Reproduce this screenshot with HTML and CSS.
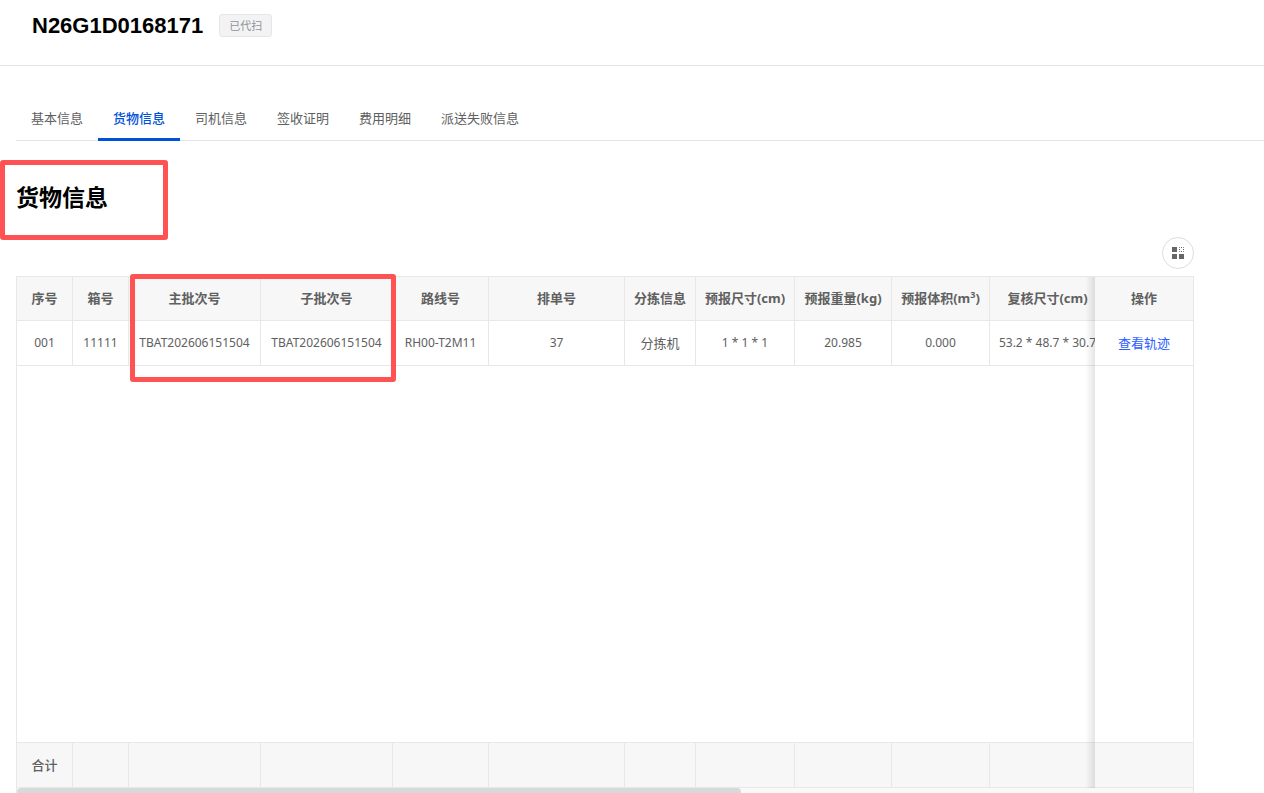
FILE: index.html
```
<!DOCTYPE html>
<html lang="zh-CN">
  <head>
    <meta charset="UTF-8" />
    <meta name="viewport" content="width=device-width, initial-scale=1.0" />
    <title>货物信息</title>
    <link rel="stylesheet" href="styles.css">
  </head>

  <body>
    <header class="page-header">
      <h1>N26G1D0168171</h1>
      <span class="tag">已代扫</span>
    </header>

    <main class="content">
      <nav class="tabs">
        <a href="#basic">基本信息</a>
        <a href="#cargo" class="active">货物信息</a>
        <a href="#driver">司机信息</a>
        <a href="#sign">签收证明</a>
        <a href="#cost">费用明细</a>
        <a href="#failed">派送失败信息</a>
      </nav>

      <section class="cargo" id="cargo">
        <div class="cargo-title">
          <h2>货物信息</h2>
          <div class="mark mark-title"></div>
        </div>

        <div class="toolbar">
          <button type="button" class="round-btn" aria-label="列设置">
            <svg width="14" height="14" viewBox="0 0 14 14">
              <path d="M1 1h5v5H1zM1 8h5v5H1zM8 8h5v5H8z" fill="#666" />
              <path d="M8.5 1.5h4v4h-4z" fill="none" stroke="#666" stroke-dasharray="1 1" stroke-dashoffset="0.5" />
            </svg>
          </button>
        </div>

        <div class="table-box">
          <div class="table-scroll">
            <table>
              <colgroup>
                <col class="w-56"><col class="w-56"><col class="w-132"><col class="w-132">
                <col class="w-96"><col class="w-136"><col class="w-71"><col class="w-99">
                <col class="w-97"><col class="w-98"><col class="w-116"><col>
                <col class="w-98">
              </colgroup>
              <thead>
                <tr>
                  <th>序号</th>
                  <th>箱号</th>
                  <th>主批次号</th>
                  <th>子批次号</th>
                  <th>路线号</th>
                  <th>排单号</th>
                  <th>分拣信息</th>
                  <th>预报尺寸(cm)</th>
                  <th>预报重量(kg)</th>
                  <th>预报体积(m<sup>3</sup>)</th>
                  <th>复核尺寸(cm)</th>
                  <th></th>
                  <th class="fixed">操作</th>
                </tr>
              </thead>
              <tbody>
                <tr>
                  <td class="num">001</td>
                  <td class="num">11111</td>
                  <td class="num">TBAT202606151504</td>
                  <td class="num">TBAT202606151504</td>
                  <td class="num">RH00-T2M11</td>
                  <td class="num">37</td>
                  <td>分拣机</td>
                  <td class="num">1 * 1 * 1</td>
                  <td class="num">20.985</td>
                  <td class="num">0.000</td>
                  <td class="num">53.2 * 48.7 * 30.7</td>
                  <td></td>
                  <td class="fixed"><a href="#track">查看轨迹</a></td>
                </tr>
                <tr class="filler">
                  <td colspan="12"></td>
                  <td class="fixed"></td>
                </tr>
              </tbody>
              <tfoot>
                <tr>
                  <td>合计</td>
                  <td></td>
                  <td></td>
                  <td></td>
                  <td></td>
                  <td></td>
                  <td></td>
                  <td></td>
                  <td></td>
                  <td></td>
                  <td></td>
                  <td></td>
                  <td class="fixed"></td>
                </tr>
              </tfoot>
            </table>
          </div>
          <div class="scrollbar"><div class="thumb"></div></div>
          <div class="mark mark-batch"></div>
        </div>
      </section>
    </main>
  </body>
</html>
```

FILE: styles.css
```
* {
  box-sizing: border-box;
}

body {
  margin: 0;
  height: 100vh;
  display: flex;
  flex-direction: column;
  overflow: hidden;
  background: #fff;
  color: #606060;
  font-family: "Noto Sans", "Noto Sans CJK SC", sans-serif;
  font-size: 13px;
}

.page-header {
  display: flex;
  align-items: flex-start;
  gap: 16px;
  padding: 12px 32px 26px;
  border-bottom: 1px solid #e4e4e4;
}

h1 {
  margin: 0;
  color: #000;
  font-family: "Liberation Sans", sans-serif;
  font-size: 22px;
  line-height: 27px;
}

.tag {
  margin-top: 2px;
  padding: 0 9px;
  border: 1px solid #e6e6e6;
  border-radius: 3px;
  background: #f3f3f3;
  color: #909399;
  font-size: 11px;
  line-height: 21px;
}

.content {
  flex: 1;
  min-height: 0;
  display: flex;
  flex-direction: column;
  padding: 32px 0 0 16px;
}

.tabs {
  display: flex;
  border-bottom: 1px solid #e4e4e4;
}

.tabs a {
  margin-bottom: -1px;
  padding: 0 15px;
  border-bottom: 3px solid transparent;
  color: #606060;
  line-height: 40px;
  text-decoration: none;
}

.tabs .active {
  border-bottom-color: #0052d9;
  color: #0052d9;
  font-weight: 500;
}

.cargo {
  flex: 1;
  min-height: 0;
  display: flex;
  flex-direction: column;
  padding-right: 70px;
}

.cargo-title {
  position: relative;
  padding: 39px 0 40px;
}

h2 {
  margin: 0;
  color: #000;
  font-size: 23px;
  line-height: 34px;
}

/* red highlight frames */
.mark {
  position: absolute;
  z-index: 5;
  border: 5px solid #ff5252;
  border-radius: 3px;
  pointer-events: none;
}

.mark-title {
  top: 19px;
  left: -16px;
  width: 168px;
  height: 80px;
}

.mark-batch {
  top: -3px;
  left: 113px;
  width: 266px;
  height: 108px;
}

.toolbar {
  display: flex;
  justify-content: flex-end;
  margin-top: -17px;
  padding-bottom: 7px;
}

.round-btn {
  width: 32px;
  height: 32px;
  display: flex;
  align-items: center;
  justify-content: center;
  padding: 0;
  border: 1px solid #dcdce6;
  border-radius: 50%;
  background: #fff;
  cursor: pointer;
}

.table-box {
  position: relative;
  flex: 1;
  min-height: 0;
  display: flex;
  flex-direction: column;
  border: 1px solid #e8e8e8;
  border-bottom: none;
}

.table-scroll {
  flex: 1;
  min-height: 0;
  overflow: auto hidden;
  scrollbar-width: none;
}

table {
  width: 1911px;
  height: 100%;
  table-layout: fixed;
  border-collapse: separate;
  border-spacing: 0;
}

th,
td {
  height: 45px;
  padding: 0;
  border-right: 1px solid #e8e8e8;
  border-bottom: 1px solid #e8e8e8;
  line-height: 20px;
  text-align: center;
  white-space: nowrap;
}

th {
  height: 44px;
  padding-bottom: 2px;
}

th,
tfoot td {
  background: #f7f7f7;
}

tfoot td {
  font-weight: 500;
}

.num {
  font-size: 12px;
}

sup {
  font-size: 9px;
  line-height: 0;
}

.filler td {
  height: auto;
}

.fixed {
  position: sticky;
  right: 0;
  border-right: none;
}

tbody .fixed {
  background: #fff;
}

.fixed::before {
  content: "";
  position: absolute;
  top: 0;
  right: 100%;
  bottom: -1px;
  width: 10px;
  background: linear-gradient(to left, rgba(0, 0, 0, 0.1), transparent);
}

.fixed a {
  color: #2b5cff;
  text-decoration: none;
}

.w-56 { width: 56px; }
.w-71 { width: 71px; }
.w-96 { width: 96px; }
.w-97 { width: 97px; }
.w-98 { width: 98px; }
.w-99 { width: 99px; }
.w-116 { width: 116px; }
.w-132 { width: 132px; }
.w-136 { width: 136px; }

.scrollbar {
  height: 5px;
  overflow: hidden;
  background: #f9f9f9;
}

.thumb {
  width: calc(100% * 8 / 13);
  height: 8px;
  border-radius: 4px;
  background: #d8d9db;
}
```
